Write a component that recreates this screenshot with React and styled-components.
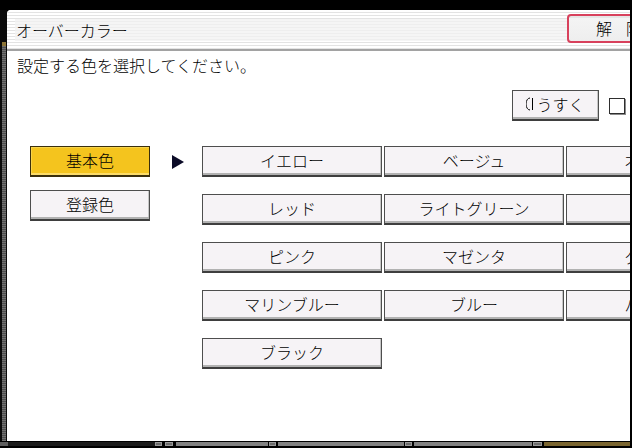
import React from "react";
import styled, { createGlobalStyle } from "styled-components";

const Global = createGlobalStyle`
  html, body { margin: 0; padding: 0; background: #000; }
  body { font-family: "Noto Sans CJK JP", "Noto Sans", sans-serif; }
  * { box-sizing: border-box; }
`;

const Screen = styled.div`
  width: 632px;
  height: 448px;
  background: #000;
  display: flex;
  flex-direction: column;
  overflow: hidden;
`;

const TopEdge = styled.div`
  height: 10px;
  flex-shrink: 0;
  background: #000;
`;

const Middle = styled.div`
  display: flex;
  height: 431px;
  flex-shrink: 0;
`;

const LeftRail = styled.div`
  width: 7px;
  flex-shrink: 0;
  background: #0a0a0a;
  padding: 32px 1px 0 2px;
  display: flex;
  flex-direction: column;
`;

const RailCap = styled.div`
  height: 4px;
  background: #8c7436;
`;

const RailBody = styled.div`
  flex: 1;
  background: repeating-linear-gradient(to bottom, #707070 0 1px, #4e4e4e 1px 2px);
`;

const RightEdge = styled.div`
  width: 2px;
  flex-shrink: 0;
  background: #000;
`;

const Panel = styled.div`
  width: 623px;
  flex-shrink: 0;
  background: #fff;
  border-top-left-radius: 4px;
  overflow: hidden;
  display: flex;
  flex-direction: column;
  color: #000;
  font-size: 16px;
  font-weight: 300;
`;

const TitleBar = styled.div`
  height: 41px;
  flex-shrink: 0;
  display: flex;
  align-items: flex-start;
  border-bottom: 2px solid #a2a2a2;
  background: repeating-linear-gradient(to bottom, #ffffff 0 2px, #e3e3e3 2px 3px);
`;

const TitleLabel = styled.div`
  flex: 1;
  margin: 9px 0 0 8px;
  height: 22px;
  line-height: 22px;
  padding-left: 1px;
  background: repeating-linear-gradient(to bottom, #f5f5f5 0 2px, #eeeeee 2px 3px);
  white-space: nowrap;
`;

const CancelButton = styled.div`
  flex-shrink: 0;
  width: 102px;
  height: 29px;
  margin: 4px -39px 0 0;
  border: 2px solid #d8415c;
  border-radius: 4px;
  background: linear-gradient(to bottom, #e6e6e6 0 2px, #f4f4f4 2px, #eeeeee);
  padding-left: 27px;
  line-height: 25px;
  letter-spacing: 14px;
  white-space: nowrap;
`;

const Instruction = styled.div`
  margin-top: 4px;
  padding-left: 10px;
  height: 20px;
  line-height: 20px;
`;

const ToolRow = styled.div`
  margin-top: 15px;
  padding-left: 505px;
  display: flex;
  align-items: center;
  gap: 10px;
`;

const KeyButton = styled.div`
  width: ${(p) => p.$w}px;
  height: 31px;
  flex-shrink: 0;
  display: flex;
  align-items: center;
  justify-content: center;
  gap: 2px;
  padding-bottom: 2px;
  white-space: nowrap;
  overflow: hidden;
  border: 1px solid ${(p) => (p.$active ? "#3a2f0c" : "#4e4e4e")};
  border-bottom: 2px solid ${(p) => (p.$active ? "#3a2f0c" : "#3e3e3e")};
  background: ${(p) => (p.$active ? "#f4c41e" : "#f6f3f6")};
  box-shadow: ${(p) =>
    p.$active
      ? "inset 0 -2px 0 #fbdc6a, inset 1px 1px 0 #f8d44a"
      : "inset 0 -2px 0 #b2b2b2, inset -1px 0 0 #c6c6c6"};
`;

const CheckBox = styled.div`
  width: 16px;
  height: 16px;
  flex-shrink: 0;
  background: #fff;
  border: 1px solid #2e2e2e;
  box-shadow: 1px 1px 0 #8a8a8a;
`;

const Main = styled.div`
  margin-top: 25px;
  padding-left: 23px;
  display: flex;
  align-items: flex-start;
`;

const SideColumn = styled.div`
  display: flex;
  flex-direction: column;
  gap: 13px;
`;

const ArrowMark = styled.svg`
  flex-shrink: 0;
  margin: 9px 17px 0 21px;
`;

const ColorGrid = styled.div`
  display: grid;
  grid-template-columns: repeat(3, 180px);
  grid-auto-rows: 31px;
  column-gap: 2px;
  row-gap: 17px;
  flex-shrink: 0;
`;

const BottomBar = styled.div`
  height: 7px;
  flex-shrink: 0;
  background: #000;
  padding: 1px 0 2px;
  display: flex;
`;

const tones = {
  rail: "#5e5e5e",
  dark: "#1c1c1c",
  box: "#6c6c6c",
  gray: "#828282",
  gold: "#7a6530",
};

const Segment = styled.div`
  width: ${(p) => p.$w}px;
  margin-left: ${(p) => p.$gap}px;
  flex-shrink: 0;
  background: ${(p) => tones[p.$tone]};
  border: ${(p) => (p.$tone === "box" ? "1px solid #9a9a9a" : "none")};
`;

const segments = [
  [0, 8, "rail"],
  [8, 155, "dark"],
  [155, 162, "box"],
  [165, 173, "box"],
  [176, 268, "gray"],
  [269, 276, "box"],
  [278, 404, "gray"],
  [405, 412, "box"],
  [414, 532, "gray"],
  [533, 542, "box"],
  [544, 630, "gold"],
];

const colors = [
  "イエロー",
  "ベージュ",
  "オレンジ",
  "レッド",
  "ライトグリーン",
  "シアン",
  "ピンク",
  "マゼンタ",
  "グリーン",
  "マリンブルー",
  "ブルー",
  "パープル",
  "ブラック",
];

const LightIcon = () => (
  <svg width="8" height="14" viewBox="0 0 8 14">
    <path d="M4 1 A4 6 0 0 0 4 13" fill="none" stroke="#000" strokeWidth="1" />
    <line x1="6.5" y1="1" x2="6.5" y2="13" stroke="#000" strokeWidth="1" />
  </svg>
);

export default function App() {
  let prevEnd = 0;
  return (
    <>
      <Global />
      <Screen>
        <TopEdge />
        <Middle>
          <LeftRail>
            <RailCap />
            <RailBody />
          </LeftRail>
          <Panel>
            <TitleBar>
              <TitleLabel>オーバーカラー</TitleLabel>
              <CancelButton>解除</CancelButton>
            </TitleBar>
            <Instruction>設定する色を選択してください。</Instruction>
            <ToolRow>
              <KeyButton $w={87}>
                <LightIcon />
                <span>うすく</span>
              </KeyButton>
              <CheckBox />
            </ToolRow>
            <Main>
              <SideColumn>
                <KeyButton $w={120} $active>
                  基本色
                </KeyButton>
                <KeyButton $w={120}>登録色</KeyButton>
              </SideColumn>
              <ArrowMark width="14" height="14" viewBox="0 0 14 14">
                <polygon points="1,0 13,7 1,14" fill="#0c0c28" />
              </ArrowMark>
              <ColorGrid>
                {colors.map((c) => (
                  <KeyButton key={c} $w={180}>
                    {c}
                  </KeyButton>
                ))}
              </ColorGrid>
            </Main>
          </Panel>
          <RightEdge />
        </Middle>
        <BottomBar>
          {segments.map(([s, e, t]) => {
            const gap = s - prevEnd;
            prevEnd = e;
            return <Segment key={s} $w={e - s} $gap={gap} $tone={t} />;
          })}
        </BottomBar>
      </Screen>
    </>
  );
}
